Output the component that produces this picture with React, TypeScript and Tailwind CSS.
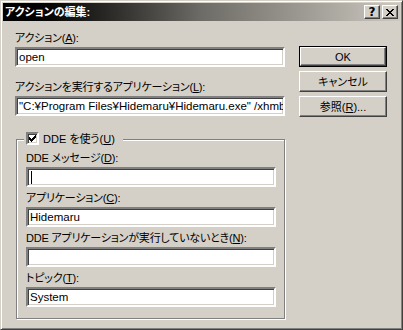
import React from "react";

const sunken =
  "border-2 border-t-[#808080] border-l-[#808080] border-b-white border-r-white shadow-[inset_1px_1px_0_#404040,inset_-1px_-1px_0_#d4d0c8] bg-white";

const raised =
  "border border-t-white border-l-white border-b-[#404040] border-r-[#404040] shadow-[inset_-1px_-1px_0_#808080] bg-[#d4d0c8]";

interface FieldProps {
  label: React.ReactNode;
  value?: string;
  width: string;
  caret?: boolean;
}

const Field: React.FC<FieldProps> = ({ label, value, width, caret }) => (
  <div className="flex flex-col">
    <div className="h-[20px] pt-[4px] leading-[14px] whitespace-nowrap tracking-[-0.2px]">{label}</div>
    <div className={`${sunken} ${width} h-[20px] flex items-center px-[2px] leading-[14px] whitespace-nowrap overflow-hidden text-[11.5px]`}>
      {caret ? <span className="w-px h-[13px] bg-black ml-px" /> : value}
    </div>
  </div>
);

const Button: React.FC<{ children: React.ReactNode; isDefault?: boolean }> = ({ children, isDefault }) => {
  const inner = (
    <div className={`${raised} h-full flex items-center justify-center leading-[14px]`}>{children}</div>
  );
  return isDefault ? (
    <div className="w-[88px] h-[21px] border border-black">{inner}</div>
  ) : (
    <div className="w-[88px] h-[21px]">{inner}</div>
  );
};

const TitleButton: React.FC<{ children: React.ReactNode }> = ({ children }) => (
  <div className={`${raised} w-[16px] h-[14px] flex items-center justify-center`}>{children}</div>
);

export default function App() {
  return (
    <div className="w-[403px] h-[330px] bg-[#d4d0c8] text-black text-[11px] font-['Liberation_Sans','Noto_Sans_CJK_JP',sans-serif] [font-feature-settings:'palt'] border border-t-[#d4d0c8] border-l-[#d4d0c8] border-b-[#404040] border-r-[#404040] shadow-[inset_1px_1px_0_#fff,inset_-1px_-1px_0_#808080] p-[2px] flex flex-col">
      <div className="h-[18px] flex items-center justify-between bg-gradient-to-r from-black via-[#6e6c66] to-[#cdc9c1] pl-[2px] pr-[2px]">
        <span className="text-white font-bold text-[11px] leading-[14px] whitespace-nowrap">アクションの編集:</span>
        <div className="flex gap-[2px]">
          <TitleButton>
            <span className="font-bold text-[12px] leading-[12px] font-['DejaVu_Sans',sans-serif]">?</span>
          </TitleButton>
          <TitleButton>
            <svg width="8" height="7" viewBox="0 0 8 7" shapeRendering="crispEdges">
              <path d="M0 0h2v1H0zM6 0h2v1H6zM1 1h2v1H1zM5 1h2v1H5zM2 2h4v1H2zM3 3h2v1H3zM2 4h4v1H2zM1 5h2v1H1zM5 5h2v1H5zM0 6h2v1H0zM6 6h2v1H6z" fill="#000" />
            </svg>
          </TitleButton>
        </div>
      </div>

      <div className="flex pl-[12px] gap-[14px]">
        <div className="flex flex-col w-[270px] pt-[6px]">
          <Field label={<>アクション(<u>A</u>):</>} value="open" width="w-[270px]" />
          <div className="mt-[9px]">
            <Field
              label={<>アクションを実行するアプリケーション(<u>L</u>):</>}
              value={"\"C:¥Program Files¥Hidemaru¥Hidemaru.exe\" /xhmbi"}
              width="w-[270px]"
            />
          </div>

          <div className="relative mt-[23px] ml-px w-[269px] h-[180px] border border-[#808080] shadow-[inset_1px_1px_0_#fff,1px_1px_0_#fff] pl-[9px] pt-[7px]">
            <div className="absolute left-[7px] top-[-8px] h-[13px] flex items-center bg-[#d4d0c8] pl-[2px] pr-[8px]">
              <div className={`${sunken} w-[13px] h-[13px] flex items-center justify-center`}>
                <svg width="7" height="7" viewBox="0 0 7 7" shapeRendering="crispEdges">
                  <path d="M6 0h1v3H6zM5 1h1v3H5zM4 2h1v3H4zM3 3h1v3H3zM2 4h1v3H2zM1 3h1v3H1zM0 2h1v3H0z" fill="#000" />
                </svg>
              </div>
              <span className="ml-[4px] leading-[14px] whitespace-nowrap">DDE を使う(<u>U</u>)</span>
            </div>
            <Field label={<>DDE メッセージ(<u>D</u>):</>} width="w-[250px]" caret />
            <Field label={<>アプリケーション(<u>C</u>):</>} value="Hidemaru" width="w-[250px]" />
            <Field label={<>DDE アプリケーションが実行していないとき(<u>N</u>):</>} width="w-[250px]" />
            <Field label={<>トピック(<u>T</u>):</>} value="System" width="w-[250px]" />
          </div>
        </div>

        <div className="flex flex-col gap-[4px] pt-[25px]">
          <Button isDefault>OK</Button>
          <Button>キャンセル</Button>
          <Button>
            参照(<u>R</u>)...
          </Button>
        </div>
      </div>
    </div>
  );
}
